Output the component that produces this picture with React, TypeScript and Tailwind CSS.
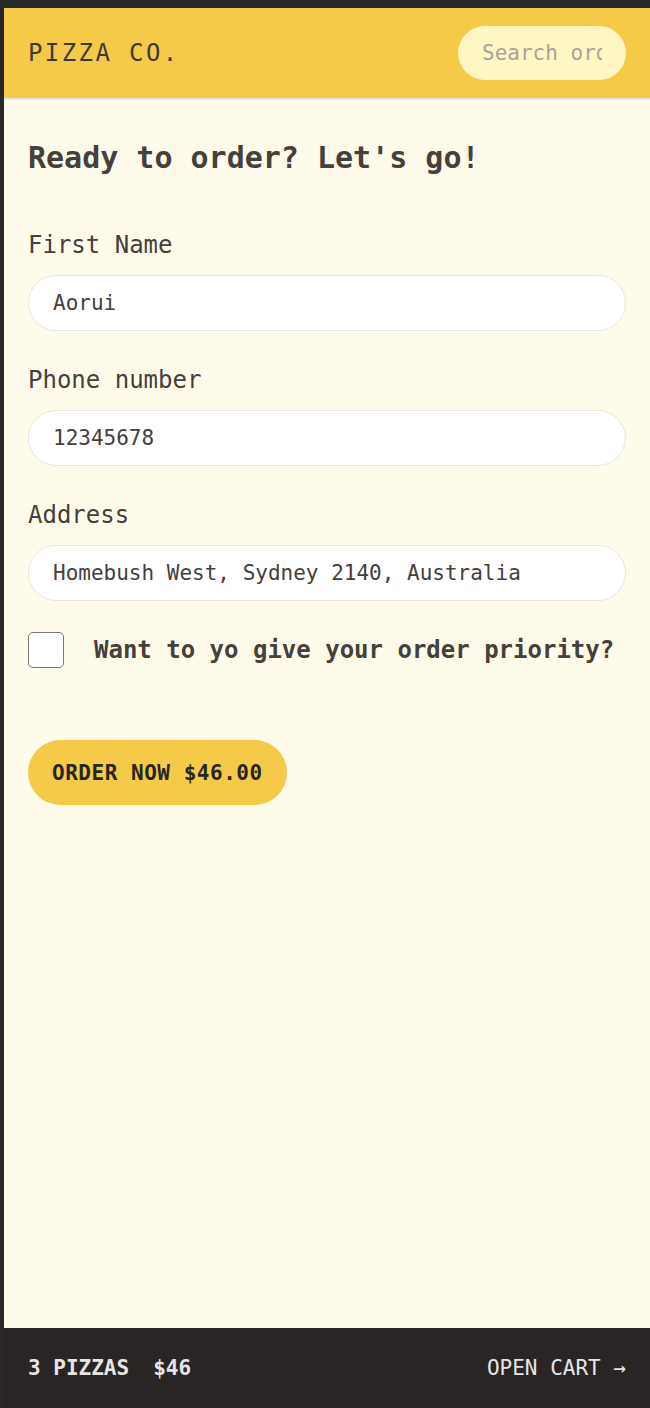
import React from "react";

const mono = "font-['DejaVu_Sans_Mono','Liberation_Mono',monospace]";

function Field({ label, value }: { label: string; value: string }) {
  return (
    <div className="mb-[31px] flex flex-col gap-3">
      <label className="text-[24px] leading-[36px]">{label}</label>
      <input
        readOnly
        value={value}
        className={`h-[56px] w-full rounded-full border border-[#e7e5e4] bg-white px-6 text-[21px] leading-[30px] text-[#44403c] outline-none ${mono}`}
      />
    </div>
  );
}

export default function App() {
  return (
    <div className={`h-[1408px] overflow-hidden bg-[#282828] pl-1 pt-2 ${mono}`}>
      <div className="flex h-full flex-col bg-[#fffbeb] text-[#44403c]">
        <header className="flex items-center justify-between border-b-2 border-[#e7e5e4] bg-[#f5ca48] px-6 py-[18px]">
          <span className="text-[24px] uppercase leading-[36px] tracking-[0.1em] text-[#3d3a36]">Pizza Co.</span>
          <input
            placeholder="Search order #"
            className={`h-[54px] w-[168px] rounded-full bg-[#fef7c3] px-6 text-[21px] leading-[30px] outline-none placeholder:text-[#a8a29e] ${mono}`}
          />
        </header>

        <main className="flex-1 px-6 pt-[37px]">
          <h2 className="mb-12 text-[30px] font-bold leading-[42px]">Ready to order? Let's go!</h2>

          <Field label="First Name" value="Aorui" />
          <Field label="Phone number" value="12345678" />
          <Field label="Address" value="Homebush West, Sydney 2140, Australia" />

          <div className="mb-[72px] flex h-[36px] items-center gap-[30px]">
            <input
              type="checkbox"
              className="h-[36px] w-[36px] shrink-0 appearance-none rounded-[5px] border border-[#767676] bg-white"
            />
            <label className="text-[24px] font-semibold leading-[36px]">Want to yo give your order priority?</label>
          </div>

          <button className="h-[65px] rounded-full bg-[#f5ca48] px-6 text-[21px] font-bold uppercase leading-[30px] tracking-wide text-[#292524]">
            Order now $46.00
          </button>
        </main>

        <footer className="flex h-[80px] items-center justify-between bg-[#292524] px-6 text-[21px] uppercase leading-[30px] text-[#e7e5e4]">
          <p className="flex gap-6 font-bold">
            <span>3 pizzas</span>
            <span>$46</span>
          </p>
          <span>Open cart &rarr;</span>
        </footer>
      </div>
    </div>
  );
}
